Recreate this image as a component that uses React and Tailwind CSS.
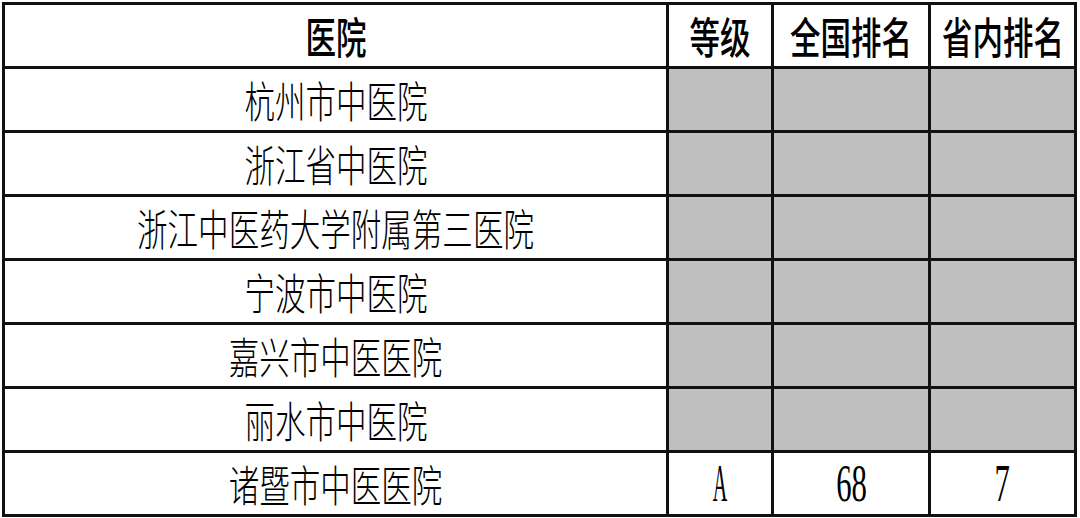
const headers = ['医院', '等级', '全国排名', '省内排名'];

const rows = [
  { name: '杭州市中医院' },
  { name: '浙江省中医院' },
  { name: '浙江中医药大学附属第三医院' },
  { name: '宁波市中医院' },
  { name: '嘉兴市中医医院' },
  { name: '丽水市中医院' },
  { name: '诸暨市中医医院', grade: 'A', national: '68', province: '7' },
];

const cjk = { fontFamily: '"Noto Sans CJK SC", "Noto Sans", sans-serif' };
const serif = { fontFamily: '"Liberation Serif", "DejaVu Serif", serif' };

function Cjk({ children, bold }) {
  return (
    <span
      className={`inline-block whitespace-nowrap text-[43px] leading-none scale-x-[0.71] text-black ${bold ? 'font-medium' : 'font-light'}`}
      style={cjk}
    >
      {children}
    </span>
  );
}

function Num({ children, narrow }) {
  return (
    <span
      className={`inline-block text-[53px] leading-none text-black ${narrow ? 'scale-x-[0.38]' : 'scale-x-[0.58]'}`}
      style={serif}
    >
      {children}
    </span>
  );
}

function Cell({ gray, children }) {
  return (
    <div className={`flex items-center justify-center ${gray ? 'bg-[#bfbfbf]' : 'bg-white'}`}>
      {children}
    </div>
  );
}

export default function App() {
  return (
    <div className="w-[1080px] h-[518px] bg-white pl-[2px] pt-[2px]">
      <div className="w-[1075px] grid grid-cols-[661px_102px_154px_143px] auto-rows-[61px] gap-[3px] p-[3px] bg-[#111]">
        {headers.map(h => (
          <Cell key={h}>
            <Cjk bold>{h}</Cjk>
          </Cell>
        ))}
        {rows.map(r => {
          const empty = !r.grade;
          return [
            <Cell key={r.name}>
              <Cjk>{r.name}</Cjk>
            </Cell>,
            <Cell key={r.name + 'g'} gray={empty}>
              {r.grade && <Num narrow>{r.grade}</Num>}
            </Cell>,
            <Cell key={r.name + 'n'} gray={empty}>
              {r.national && <Num>{r.national}</Num>}
            </Cell>,
            <Cell key={r.name + 'p'} gray={empty}>
              {r.province && <Num>{r.province}</Num>}
            </Cell>,
          ];
        })}
      </div>
    </div>
  );
}
